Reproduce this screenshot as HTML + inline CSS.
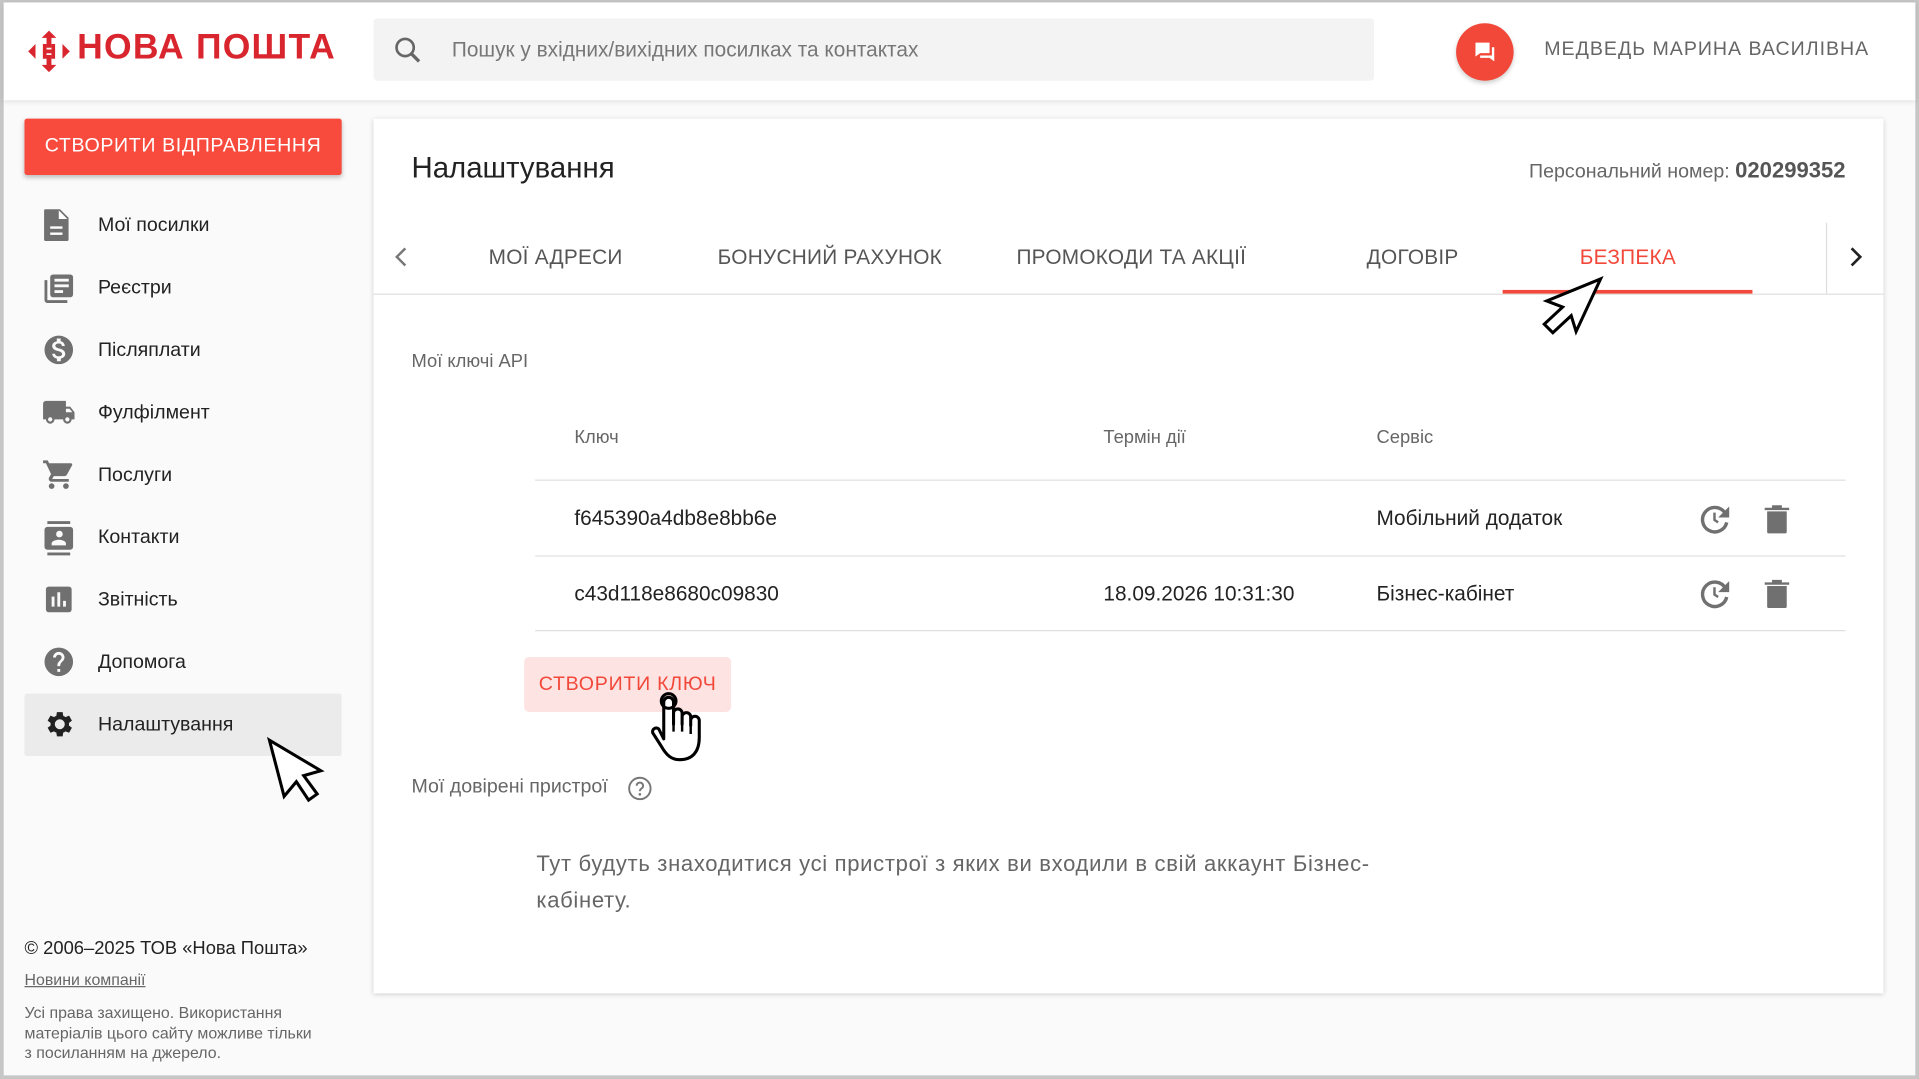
<!DOCTYPE html>
<html><head><meta charset="utf-8"><style>
*{margin:0;padding:0;box-sizing:border-box}
html,body{width:1919px;height:1079px;overflow:hidden;background:#fafafa}
#w{position:absolute;left:0;top:0;width:1567px;height:882px;transform:scale(1.22463,1.22336);transform-origin:0 0;background:#fafafa;font-family:"Liberation Sans",Arial,sans-serif;color:#222;border:3px solid #c6c6c6;border-top-width:2px}
.a{position:absolute;white-space:nowrap}
.hdr{position:absolute;left:0;top:0;width:1561px;height:80px;background:#fff;box-shadow:0 1px 4px rgba(0,0,0,.12)}
.mi{position:absolute;left:77px;font-size:16px;color:#222}
.ic{position:absolute;left:31px}
.tab{position:absolute;top:199px;font-size:17px;color:#555;letter-spacing:.2px}
.th{font-size:15px;color:#666}
.td{font-size:17px;color:#222}
.line{position:absolute;left:434px;width:1070px;height:1px;background:#e0e0e0}
</style></head><body><div id="w">
<div class="hdr"></div>
<svg class="a" style="left:19px;top:22px" width="36" height="36" viewBox="0 0 36 36"><g fill="#d9262e"><path d="M18 1l6 6h-4v8h-4V7h-4z"/><path d="M18 35l6-6h-4v-8h-4v8h-4z"/><path d="M1 18l6-6v12z"/><path d="M35 18l-6-6v12z"/><path d="M13 12h3v12h-3zM20 12h3v12h-3zM13 16.5h10v3H13z"/></g></svg>
<div class="a" style="left:60px;top:21px;font-size:29px;font-weight:bold;color:#d9262e;letter-spacing:1px">НОВА ПОШТА</div>
<div class="a" style="left:302px;top:13px;width:817px;height:51px;background:#f3f3f3;border-radius:3px"></div>
<svg class="a" style="left:317px;top:26px" width="26" height="26" viewBox="0 0 24 24"><circle cx="10" cy="10" r="6.5" fill="none" stroke="#666" stroke-width="2"/><path d="M14.5 14.5l6 6" stroke="#666" stroke-width="2.5"/></svg>
<div class="a" style="left:366px;top:29px;font-size:17px;color:#777">Пошук у вхідних/вихідних посилках та контактах</div>
<div class="a" style="left:1186px;top:17px;width:47px;height:47px;border-radius:50%;background:#f2483a;box-shadow:0 2px 4px rgba(0,0,0,.2)"></div>
<svg class="a" style="left:1198px;top:29px" width="23" height="23" viewBox="0 0 24 24"><path fill="#fff" d="M4 4h12v9H8l-4 3zM18 8h2v12l-4-3H8v-2h10z"/></svg>
<div class="a" style="left:1258px;top:30px;font-size:16px;color:#666;letter-spacing:.8px">МЕДВЕДЬ МАРИНА ВАСИЛІВНА</div>

<div class="a" style="left:17px;top:95px;width:259px;height:46px;background:#f84b3d;border-radius:2px;box-shadow:0 2px 4px rgba(0,0,0,.25);color:#fff;font-size:16px;text-align:center;line-height:46px;letter-spacing:.5px">СТВОРИТИ ВІДПРАВЛЕННЯ</div>
<div class="a" style="left:17px;top:565px;width:259px;height:51px;background:#ebebeb;border-radius:2px"></div>
<svg class="ic" style="top:168px" width="24" height="28" viewBox="0 0 24 28"><path fill="#707070" d="M3 1h12l7 7v18a1 1 0 0 1-1 1H3a1 1 0 0 1-1-1V2a1 1 0 0 1 1-1z"/><path fill="#fff" d="M14 2v7h7zM7 15h10v2H7zM7 20h10v2H7z"/></svg>
<div class="mi" style="top:174px">Мої посилки</div>
<svg class="ic" style="top:220px" width="28" height="28" viewBox="0 0 24 24"><path fill="#707070" d="M4 6H2v14a2 2 0 0 0 2 2h14v-2H4zm16-4H8a2 2 0 0 0-2 2v12a2 2 0 0 0 2 2h12a2 2 0 0 0 2-2V4a2 2 0 0 0-2-2zm-1 9H9V9h10zm-4 4H9v-2h6zm4-8H9V5h10z"/></svg>
<div class="mi" style="top:225px">Реєстри</div>
<svg class="ic" style="top:270px" width="28" height="28" viewBox="0 0 24 24"><path fill="#707070" d="M12 2a10 10 0 1 0 0 20 10 10 0 0 0 0-20zm1.4 16.1V20h-2.7v-1.9c-1.7-.4-3.2-1.5-3.3-3.4h2c.1 1 .8 1.8 2.6 1.8 1.9 0 2.3-.9 2.3-1.5 0-.8-.4-1.6-2.7-2.1-2.5-.6-4.2-1.6-4.2-3.7 0-1.700 1.4-2.9 3.2-3.2V4h2.7v1.9c1.9.5 2.8 1.9 2.9 3.4h-2c-.1-1.1-.6-1.8-2.2-1.8-1.5 0-2.4.7-2.4 1.6 0 .8.7 1.4 2.7 1.9s4.2 1.4 4.2 3.9c0 1.8-1.4 2.8-3.1 3.2z"/></svg>
<div class="mi" style="top:276px">Післяплати</div>
<svg class="ic" style="top:321px;left:29px" width="32" height="28" viewBox="0 0 24 24"><path fill="#707070" d="M20 8h-3V4H3a2 2 0 0 0-2 2v11h2a3 3 0 0 0 6 0h6a3 3 0 0 0 6 0h2v-5zM6 18.5a1.5 1.5 0 1 1 0-3 1.5 1.5 0 0 1 0 3zm13.5-9l2 2.5H17V9.5zM18 18.5a1.5 1.5 0 1 1 0-3 1.5 1.5 0 0 1 0 3z"/></svg>
<div class="mi" style="top:327px">Фулфілмент</div>
<svg class="ic" style="top:372px" width="28" height="28" viewBox="0 0 24 24"><path fill="#707070" d="M7 18a2 2 0 1 0 0 4 2 2 0 0 0 0-4zM1 2v2h2l3.6 7.6-1.4 2.4A2 2 0 0 0 7 17h12v-2H7.4l1.1-2h7.5c.8 0 1.4-.4 1.7-1l3.6-6.5A1 1 0 0 0 20.4 4H5.2l-.9-2zm16 16a2 2 0 1 0 0 4 2 2 0 0 0 0-4z"/></svg>
<div class="mi" style="top:378px">Послуги</div>
<svg class="ic" style="top:423px" width="28" height="30" viewBox="0 0 24 24"><path fill="#707070" d="M20 0H4v2h16zM4 24h16v-2H4zM20 4H4a2 2 0 0 0-2 2v12a2 2 0 0 0 2 2h16a2 2 0 0 0 2-2V6a2 2 0 0 0-2-2zm-8 2.8a2.3 2.3 0 1 1 0 4.5 2.3 2.3 0 0 1 0-4.5zM17 17H7v-1.5c0-1.7 3.3-2.5 5-2.5s5 .8 5 2.5z"/></svg>
<div class="mi" style="top:429px">Контакти</div>
<svg class="ic" style="top:474px" width="28" height="28" viewBox="0 0 24 24"><path fill="#707070" d="M19 3H5a2 2 0 0 0-2 2v14a2 2 0 0 0 2 2h14a2 2 0 0 0 2-2V5a2 2 0 0 0-2-2zM9 17H7v-7h2zm4 0h-2V7h2zm4 0h-2v-4h2z"/></svg>
<div class="mi" style="top:480px">Звітність</div>
<svg class="ic" style="top:525px" width="28" height="28" viewBox="0 0 24 24"><path fill="#707070" d="M12 2a10 10 0 1 0 0 20 10 10 0 0 0 0-20zm1 17h-2v-2h2zm2.1-7.8l-.9.9C13.5 12.9 13 13.5 13 15h-2v-.5c0-1.1.4-2.1 1.2-2.8l1.2-1.3A2 2 0 0 0 14 9a2 2 0 0 0-4 0H8a4 4 0 0 1 8 0c0 .9-.4 1.7-.9 2.2z"/></svg>
<div class="mi" style="top:531px">Допомога</div>
<svg class="ic" style="top:576px" width="28" height="28" viewBox="0 0 24 24"><path fill="#222" d="M19.1 12.9a7 7 0 0 0 0-1.8l2.1-1.6-2-3.5-2.5 1a7 7 0 0 0-1.6-.9L14.7 3.5h-4l-.4 2.6a7 7 0 0 0-1.6.9l-2.5-1-2 3.5 2.1 1.6a7 7 0 0 0 0 1.8l-2.1 1.6 2 3.5 2.5-1c.5.4 1 .7 1.6.9l.4 2.6h4l.4-2.6c.6-.2 1.1-.5 1.6-.9l2.5 1 2-3.5zM12.7 15.5a3.5 3.5 0 1 1 0-7 3.5 3.5 0 0 1 0 7z"/></svg>
<div class="mi" style="top:582px">Налаштування</div>
<svg class="a" style="left:214px;top:600px" width="52" height="58" viewBox="0 0 52 58"><path d="M3 3l42 25-14 4 11 15-7 5-10-15-10 12z" fill="#fff" stroke="#000" stroke-width="2.5"/></svg>
<div class="a" style="left:17px;top:765px;font-size:15px;color:#222">© 2006–2025 ТОВ «Нова Пошта»</div>
<div class="a" style="left:17px;top:791px;font-size:13px;color:#666;text-decoration:underline">Новини компанії</div>
<div class="a" style="left:17px;top:818px;font-size:13px;color:#666;line-height:16.5px;white-space:normal;width:240px">Усі права захищено. Використання матеріалів цього сайту можливе тільки з посиланням на джерело.</div>

<div class="a" style="left:302px;top:95px;width:1233px;height:715px;background:#fff;box-shadow:0 1px 4px rgba(0,0,0,.18)"></div>
<div class="a" style="left:333px;top:122px;font-size:24px;color:#222">Налаштування</div>
<div class="a" style="right:57px;top:127px;font-size:16px;color:#666">Персональний номер: <span style="font-size:18px;color:#555;font-weight:bold">020299352</span></div>
<div class="a" style="left:302px;top:238px;width:1233px;height:1px;background:#e0e0e0"></div>
<svg class="a" style="left:318px;top:199px" width="14" height="18" viewBox="0 0 14 18"><path d="M10 2L3 9l7 7" fill="none" stroke="#777" stroke-width="2"/></svg>
<div class="a" style="left:1488px;top:180px;width:1px;height:58px;background:#ddd"></div>
<svg class="a" style="left:1505px;top:199px" width="14" height="18" viewBox="0 0 14 18"><path d="M4 2l7 7-7 7" fill="none" stroke="#222" stroke-width="2.2"/></svg>
<div class="tab" style="left:396px">МОЇ АДРЕСИ</div>
<div class="tab" style="left:583px">БОНУСНИЙ РАХУНОК</div>
<div class="tab" style="left:827px">ПРОМОКОДИ ТА АКЦІЇ</div>
<div class="tab" style="left:1113px">ДОГОВІР</div>
<div class="tab" style="left:1287px;color:#f2483a">БЕЗПЕКА</div>
<div class="a" style="left:1224px;top:235px;width:204px;height:3px;background:#f2483a"></div>
<svg class="a" style="left:1248px;top:222px" width="60" height="60" viewBox="0 0 60 60"><path d="M56 4L12 22l13 5-15 14 7 7 15-14 4 13z" fill="#fff" stroke="#000" stroke-width="2.5"/></svg>

<div class="a" style="left:333px;top:285px;font-size:15px;color:#666">Мої ключі API</div>
<div class="a th" style="left:466px;top:347px">Ключ</div>
<div class="a th" style="left:898px;top:347px">Термін дії</div>
<div class="a th" style="left:1121px;top:347px">Сервіс</div>
<div class="line" style="top:390px"></div>
<div class="a td" style="left:466px;top:412px;width:178px;overflow:hidden">f645390a4db8e8bb6e</div>
<div class="a td" style="left:1121px;top:412px">Мобільний додаток</div>
<div class="line" style="top:452px"></div>
<div class="a td" style="left:466px;top:474px;width:178px;overflow:hidden">c43d118e8680c09830</div>
<div class="a td" style="left:898px;top:474px">18.09.2026 10:31:30</div>
<div class="a td" style="left:1121px;top:474px">Бізнес-кабінет</div>
<div class="line" style="top:513px"></div>
<svg class="a" style="left:1384px;top:408px" width="28" height="28" viewBox="0 0 28 28"><path d="M22 10A10 10 0 1 0 23 17" fill="none" stroke="#707070" stroke-width="2.8"/><path d="M25 4v9h-9z" fill="#707070"/><path d="M13 9v6l3 2" fill="none" stroke="#707070" stroke-width="2"/></svg>
<svg class="a" style="left:1384px;top:469px" width="28" height="28" viewBox="0 0 28 28"><path d="M22 10A10 10 0 1 0 23 17" fill="none" stroke="#707070" stroke-width="2.8"/><path d="M25 4v9h-9z" fill="#707070"/><path d="M13 9v6l3 2" fill="none" stroke="#707070" stroke-width="2"/></svg>
<svg class="a" style="left:1436px;top:408px" width="24" height="28" viewBox="0 0 24 28"><path fill="#707070" d="M2 5h20v2H2zM8 3h8v2H8zM4 8h16v17a1 1 0 0 1-1 1H5a1 1 0 0 1-1-1z"/></svg>
<svg class="a" style="left:1436px;top:469px" width="24" height="28" viewBox="0 0 24 28"><path fill="#707070" d="M2 5h20v2H2zM8 3h8v2H8zM4 8h16v17a1 1 0 0 1-1 1H5a1 1 0 0 1-1-1z"/></svg>

<div class="a" style="left:425px;top:535px;width:169px;height:45px;background:#fde4e2;border-radius:4px;color:#f2483a;font-size:16px;text-align:center;line-height:45px;letter-spacing:.6px">СТВОРИТИ КЛЮЧ</div>
<svg class="a" style="left:522px;top:562px" width="58" height="64" viewBox="0 0 58 64"><path d="M17 40V10a4 4 0 0 1 8 0v18l0-9a3.5 3.5 0 0 1 7 0v9-6a3.5 3.5 0 0 1 7 0v7-4a3.5 3.5 0 0 1 7 0v14c0 12-6 18-16 18-7 0-11-4-15-11l-7-11a3 3 0 0 1 5-3z" fill="#fff" stroke="#000" stroke-width="2.5" stroke-linejoin="round"/><circle cx="21" cy="9" r="6" fill="none" stroke="#000" stroke-width="2.5"/><path d="M25 22v12M32 22v12M39 26v10" stroke="#000" stroke-width="2"/></svg>

<div class="a" style="left:333px;top:633px;font-size:16px;color:#666">Мої довірені пристрої</div>
<svg class="a" style="left:509px;top:632px" width="21" height="21" viewBox="0 0 24 24"><circle cx="12" cy="12" r="10" fill="none" stroke="#777" stroke-width="1.8"/><path d="M9 9.5a3 3 0 1 1 4.5 2.6c-1 .6-1.5 1.2-1.5 2.4" fill="none" stroke="#777" stroke-width="1.8"/><circle cx="12" cy="17.5" r="1.2" fill="#777"/></svg>
<div class="a" style="left:435px;top:689px;font-size:18px;color:#666;line-height:30px;white-space:normal;width:720px;letter-spacing:.55px">Тут будуть знаходитися усі пристрої з яких ви входили в свій аккаунт Бізнес-кабінету.</div>
</div></body></html>
